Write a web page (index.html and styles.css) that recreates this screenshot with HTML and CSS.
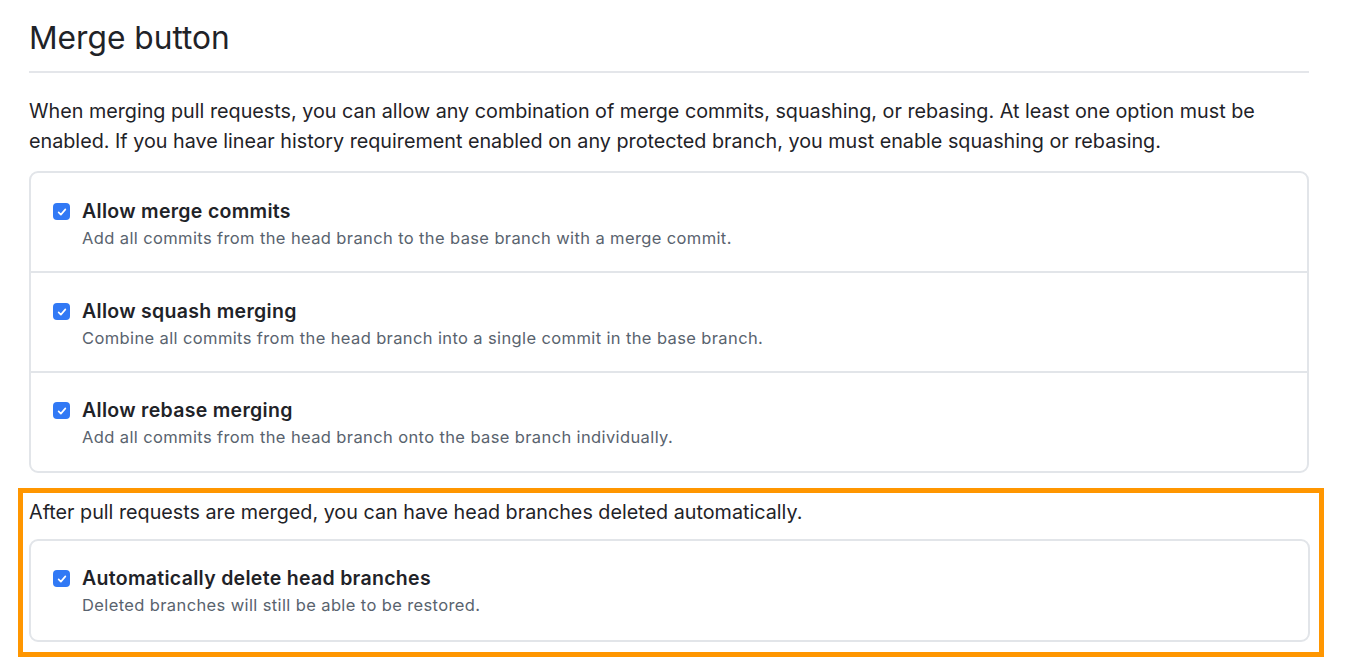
FILE: index.html
```html
<!DOCTYPE html>
<html>
<head>
<meta charset="utf-8">
<link rel="stylesheet" href="styles.css">
</head>
<body>
<div class="page">
  <h2 class="heading">Merge button</h2>
  <p class="intro">When merging pull requests, you can allow any combination of merge commits, squashing, or rebasing. At least one option must be enabled. If you have linear history requirement enabled on any protected branch, you must enable squashing or rebasing.</p>
  <div class="card">
    <div class="row">
      <span class="check"><svg viewBox="0 0 16 16" width="12" height="12"><path d="M3.5 8.5 L6.5 11.5 L12.5 4.5" fill="none" stroke="#fff" stroke-width="2.2" stroke-linecap="round" stroke-linejoin="round"/></svg></span>
      <div class="text">
        <div class="title">Allow merge commits</div>
        <div class="desc">Add all commits from the head branch to the base branch with a merge commit.</div>
      </div>
    </div>
    <div class="row">
      <span class="check"><svg viewBox="0 0 16 16" width="12" height="12"><path d="M3.5 8.5 L6.5 11.5 L12.5 4.5" fill="none" stroke="#fff" stroke-width="2.2" stroke-linecap="round" stroke-linejoin="round"/></svg></span>
      <div class="text">
        <div class="title">Allow squash merging</div>
        <div class="desc">Combine all commits from the head branch into a single commit in the base branch.</div>
      </div>
    </div>
    <div class="row">
      <span class="check"><svg viewBox="0 0 16 16" width="12" height="12"><path d="M3.5 8.5 L6.5 11.5 L12.5 4.5" fill="none" stroke="#fff" stroke-width="2.2" stroke-linecap="round" stroke-linejoin="round"/></svg></span>
      <div class="text">
        <div class="title">Allow rebase merging</div>
        <div class="desc">Add all commits from the head branch onto the base branch individually.</div>
      </div>
    </div>
  </div>
  <div class="highlight">
    <p class="after">After pull requests are merged, you can have head branches deleted automatically.</p>
    <div class="card">
      <div class="row">
        <span class="check"><svg viewBox="0 0 16 16" width="12" height="12"><path d="M3.5 8.5 L6.5 11.5 L12.5 4.5" fill="none" stroke="#fff" stroke-width="2.2" stroke-linecap="round" stroke-linejoin="round"/></svg></span>
        <div class="text">
          <div class="title">Automatically delete head branches</div>
          <div class="desc">Deleted branches will still be able to be restored.</div>
        </div>
      </div>
    </div>
  </div>
</div>
</body>
</html>
```

FILE: styles.css
```css
html, body {
  margin: 0;
  padding: 0;
  background: #ffffff;
}
body {
  font-family: Inter, "Liberation Sans", Arial, sans-serif;
  color: #1f2328;
}
.page {
  width: 1280px;
  padding: 17px 0 0 29px;
}
.heading {
  margin: 0;
  font-size: 31.7px;
  font-weight: 400;
  line-height: 42px;
  padding-bottom: 12px;
  border-bottom: 2px solid #e4e6ea;
}
.intro {
  margin: 23px 0 15px 0;
  font-size: 19.75px;
  line-height: 30px;
}
.card {
  border: 2px solid #e2e5e9;
  border-radius: 9px;
}
.row {
  display: flex;
  align-items: flex-start;
  height: 98px;
  box-sizing: border-box;
  padding: 27px 22px 0 22px;
}
.row + .row {
  height: 100px;
  padding-top: 27px;
  border-top: 2px solid #e2e5e9;
}
.row:last-child {
  padding-top: 26px;
}
.check {
  flex: none;
  width: 17px;
  height: 17px;
  margin-top: 3px;
  border-radius: 4px;
  background: #3179f5;
  display: flex;
  align-items: center;
  justify-content: center;
}
.check svg {
  display: block;
}
.text {
  margin-left: 12px;
}
.title {
  font-size: 19.5px;
  font-weight: 600;
  line-height: 23px;
  letter-spacing: 0.3px;
}
.desc {
  margin-top: 4px;
  font-size: 16.5px;
  line-height: 22px;
  letter-spacing: 0.38px;
  color: #59636e;
}
.highlight {
  margin: 15px 0 0 -11px;
  width: 1306px;
  box-sizing: border-box;
  border: 5px solid #ff9600;
  padding: 4px 9px 10px 6px;
}
.after {
  margin: 0 0 12px 0;
  font-size: 19.75px;
  line-height: 30px;
}
.highlight .row {
  height: 99px;
  padding-top: 26px;
}
```
